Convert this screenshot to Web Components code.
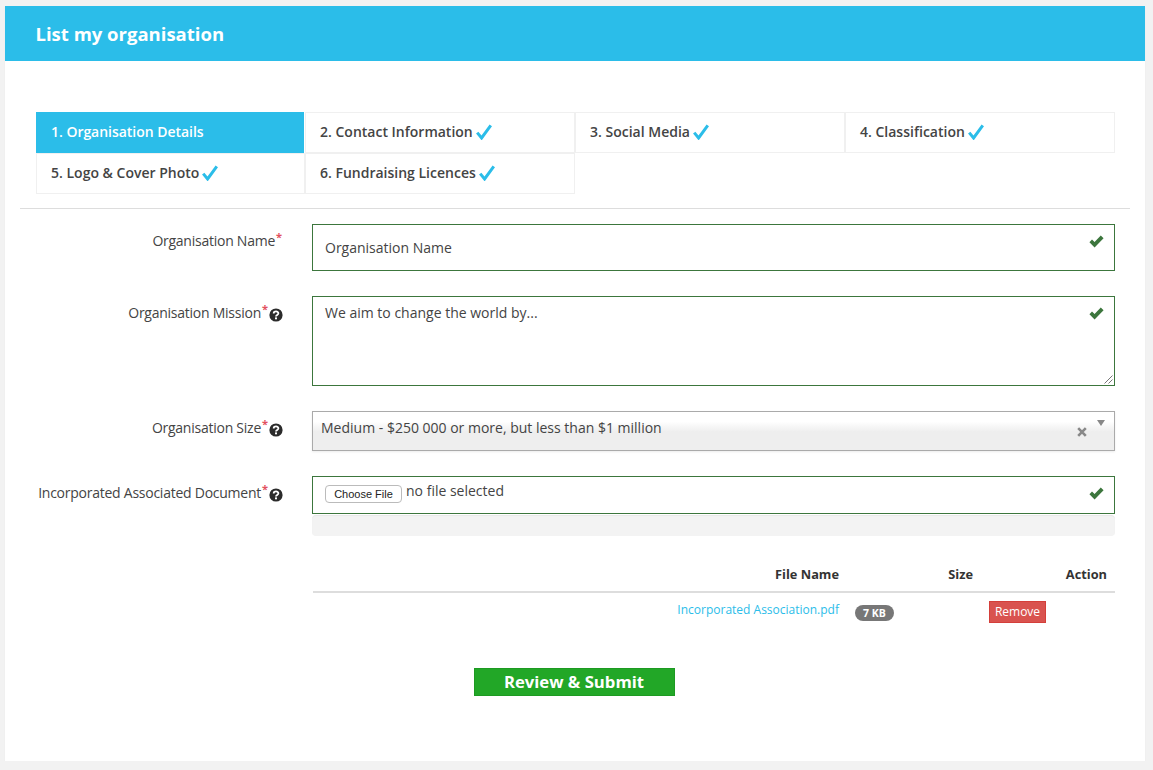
<!DOCTYPE html>
<html>
<head>
<meta charset="utf-8">
<title>List my organisation</title>
<style>
  html, body { margin: 0; padding: 0; background: #f2f2f2; }
  body { font-family: "Open Sans", "Liberation Sans", sans-serif; color: #444; font-size: 14px; }
  org-page { padding: 6px 8px 0 5px; }
</style>
</head>
<body>
<org-page title="List my organisation">
  <step-tabs>
    <step-tab active>1. Organisation Details</step-tab>
    <step-tab done>2. Contact Information</step-tab>
    <step-tab done>3. Social Media</step-tab>
    <step-tab done>4. Classification</step-tab>
    <step-tab done>5. Logo &amp; Cover Photo</step-tab>
    <step-tab done>6. Fundraising Licences</step-tab>
  </step-tabs>
  <form-row label="Organisation Name">
    <text-field height="47" pad-top="13" valid>Organisation Name</text-field>
  </form-row>
  <form-row label="Organisation Mission" help>
    <text-field height="90" pad-top="6" valid resizer>We aim to change the world by...</text-field>
  </form-row>
  <form-row label="Organisation Size" help>
    <select-field>Medium - $250 000 or more, but less than $1 million</select-field>
  </form-row>
  <form-row label="Incorporated Associated Document" help style="--row-gap:29px">
    <file-field></file-field>
  </form-row>
  <file-table></file-table>
  <submit-button>Review &amp; Submit</submit-button>
</org-page>

<script>
// Page frame: blue title bar, white card, slot for the form
class OrgPage extends HTMLElement {
  constructor() {
    super();
    this.attachShadow({ mode: 'open' }).innerHTML = `
      <style>
        :host { display: block; }
        .card { background: #fff; height: 755px; box-shadow: 0 1px 1px rgba(0,0,0,.06); display: flex; flex-direction: column; }
        h1 { margin: 0; height: 55px; line-height: 56px; padding-left: 30.5px; background: #2bbde9; color: #fff; font-size: 18.5px; font-weight: 700; }
        .body { padding: 51px 15px 0; }
      </style>
      <div class="card">
        <h1>${this.getAttribute('title')}</h1>
        <div class="body"><slot></slot></div>
      </div>`;
    this.removeAttribute('title');
  }
}

// Wizard steps, four to a line, with the rule under them
class StepTabs extends HTMLElement {
  constructor() {
    super();
    this.attachShadow({ mode: 'open' }).innerHTML = `
      <style>
        :host { display: block; padding: 0 15px 14px 16px; border-bottom: 1px solid #ddd; margin-bottom: 15px; }
        .grid { display: grid; grid-template-columns: 269px repeat(3, 270px); }
      </style>
      <div class="grid"><slot></slot></div>`;
  }
}

class StepTab extends HTMLElement {
  constructor() {
    super();
    this.attachShadow({ mode: 'open' }).innerHTML = `
      <style>
        :host { display: flex; align-items: center; height: 41px; box-sizing: border-box; padding: 0 0 2px 14px;
                border: 1px solid #f0f0f0; font-size: 14px; font-weight: 600; color: #444; }
        :host([active]) { background: #2bbde9; border-color: #2bbde9; color: #fff; margin-right: 1px; letter-spacing: -.03px; }
        svg { width: 16px; height: 16px; margin: 1px 0 0 3px; display: none; }
        :host([done]) svg { display: block; }
      </style>
      <slot></slot>
      <svg viewBox="0 0 16 16"><path d="M1.2 8.6 L5.6 14 L14.8 1.4" fill="none" stroke="#2bbde9" stroke-width="3"/></svg>`;
  }
}

// Label column on the left, control on the right
class FormRow extends HTMLElement {
  constructor() {
    super();
    const help = this.hasAttribute('help') ? `
      <svg class="help" viewBox="0 0 14 14">
        <circle cx="7" cy="7" r="6.6" fill="#2b2b2b"/>
        <path d="M4.7 5.4 C4.7 2.8 9.4 2.8 9.4 5.3 C9.4 7 7 6.8 7 8.5" fill="none" stroke="#fff" stroke-width="1.8"/>
        <rect x="6" y="9.4" width="2" height="1.9" fill="#fff"/>
      </svg>` : '';
    this.attachShadow({ mode: 'open' }).innerHTML = `
      <style>
        :host { display: grid; grid-template-columns: 277px 1fr; column-gap: 15px; margin-bottom: var(--row-gap, 25px); padding-right: 15px; }
        .label { display: flex; justify-content: flex-end; align-items: flex-start; box-sizing: border-box; padding: 7px 14px 0 0; line-height: 20px; color: #444; font-size: 14px; letter-spacing: -.25px; white-space: nowrap; }
        .label.nohelp { padding-right: 17px; }
        .req { color: #e2505e; font-size: 11px; font-weight: 700; line-height: 12px; margin: 0 -2px 0 1px; letter-spacing: 0; }
        .help { width: 14px; height: 14px; margin: 5px 0 0 3px; }
      </style>
      <div class="label ${help ? '' : 'nohelp'}"><span>${this.getAttribute('label')}</span><span class="req">*</span>${help}</div>
      <div><slot></slot></div>`;
  }
}

const okIcon = `<svg class="ok" viewBox="0 0 14 12" preserveAspectRatio="none"><path d="M0.4 6.6 L2.8 4.1 L5.2 6.4 L11 0.4 L13.6 3 L5.2 11.6 Z" fill="#3c763d"/></svg>`;

// Looks like a bootstrap input in its success state
class TextField extends HTMLElement {
  constructor() {
    super();
    const h = this.getAttribute('height');
    const top = this.getAttribute('pad-top');
    const resizer = this.hasAttribute('resizer')
      ? `<svg class="grip" viewBox="0 0 9 9"><path d="M0.5 8.5 L8.5 0.5 M4.5 8.5 L8.5 4.5" stroke="#777" stroke-width="1" fill="none"/></svg>` : '';
    this.attachShadow({ mode: 'open' }).innerHTML = `
      <style>
        :host { display: block; position: relative; box-sizing: border-box; height: ${h}px; padding: ${top}px 12px 0; border: 1px solid #3c763d; background: #fff; font-size: 14px; line-height: 20px; color: #444; }
        .ok { position: absolute; right: 10px; top: 10px; width: 15px; height: 13px; }
        .grip { position: absolute; right: 1px; bottom: 1px; width: 9px; height: 9px; }
      </style>
      <slot></slot>${okIcon}${resizer}`;
  }
}

// chosen.js style single select
class SelectField extends HTMLElement {
  constructor() {
    super();
    this.attachShadow({ mode: 'open' }).innerHTML = `
      <style>
        :host { display: block; position: relative; box-sizing: border-box; height: 40px; padding: 6px 8px 0; border: 1px solid #aaa;
                background: linear-gradient(#fff 0, #fff 25%, #eee 52%, #eee 100%); box-shadow: 0 1px 2px rgba(0,0,0,.08); font-size: 14px; line-height: 20px; color: #444; }
        .clear { position: absolute; right: 27px; top: 15px; width: 10px; height: 10px; }
        .arrow { position: absolute; right: 9px; top: 8px; width: 8px; height: 6px; }
      </style>
      <slot></slot>
      <svg class="clear" viewBox="0 0 10 10"><path d="M1.2 1.2 L8.8 8.8 M8.8 1.2 L1.2 8.8" stroke="#888" stroke-width="2.6" fill="none"/></svg>
      <svg class="arrow" viewBox="0 0 8 6"><path d="M0 0 H8 L4 6 Z" fill="#888"/></svg>`;
  }
}

// File input box plus the grey progress strip under it
class FileField extends HTMLElement {
  constructor() {
    super();
    this.attachShadow({ mode: 'open' }).innerHTML = `
      <style>
        :host { display: block; }
        .box { position: relative; box-sizing: border-box; height: 38px; border: 1px solid #3c763d; background: #fff; padding: 4px 12px 0; display: flex; align-items: flex-start; font-size: 14px; line-height: 20px; color: #444; }
        button { font: 11px "Liberation Sans", Arial, sans-serif; color: #222; height: 18px; width: 77px; margin: 4px 4px 0 0; padding: 0; background: #fff; border: 1px solid #bbb; border-radius: 4px; }
        .ok { position: absolute; right: 10px; top: 10px; width: 15px; height: 13px; }
        .progress { height: 21px; margin-top: 1px; background: #f3f3f3; border-radius: 4px; box-shadow: inset 0 1px 1px rgba(0,0,0,.05); }
      </style>
      <div class="box"><button type="button">Choose File</button><span>no file selected</span>${okIcon}</div>
      <div class="progress"></div>`;
  }
}

class FileTable extends HTMLElement {
  constructor() {
    super();
    this.attachShadow({ mode: 'open' }).innerHTML = `
      <style>
        :host { display: block; margin: 0 15px 45px 293px; font-size: 12px; }
        table { width: 100%; border-collapse: collapse; table-layout: fixed; }
        col.side { width: 134px; }
        th { height: 27px; padding: 0 8px 8px; box-sizing: border-box; text-align: right; font-size: 12.8px; font-weight: 700; color: #333; border-bottom: 2px solid #ddd; }
        td { padding: 8px 8px 0; vertical-align: top; line-height: 20px; }
        td.name { padding-top: 7px; text-align: right; color: #2bbde9; }
        .badge { display: inline-block; margin-top: 4px; padding: 0 8px; height: 16px; line-height: 16px; border-radius: 8px; background: #777; color: #fff; font-size: 10.5px; font-weight: 700; vertical-align: top; }
        .remove { display: block; width: 57px; height: 22px; box-sizing: border-box; background: #d9534f; border: 1px solid #d43f3a; color: #fff; font-size: 12px; line-height: 20px; text-align: center; }
      </style>
      <table>
        <colgroup><col><col class="side"><col class="side"></colgroup>
        <thead><tr><th>File Name</th><th>Size</th><th>Action</th></tr></thead>
        <tbody><tr>
          <td class="name">Incorporated Association.pdf</td>
          <td><span class="badge">7 KB</span></td>
          <td><span class="remove">Remove</span></td>
        </tr></tbody>
      </table>`;
  }
}

class SubmitButton extends HTMLElement {
  constructor() {
    super();
    this.attachShadow({ mode: 'open' }).innerHTML = `
      <style>
        :host { display: flex; justify-content: center; padding-right: 2px; }
        .btn { box-sizing: border-box; width: 201px; height: 28px; line-height: 26px; text-align: center; background: #22a727; border: 1px solid #1d9a22; color: #fff; font-size: 16.7px; font-weight: 700; }
      </style>
      <div class="btn"><slot></slot></div>`;
  }
}

customElements.define('org-page', OrgPage);
customElements.define('step-tabs', StepTabs);
customElements.define('step-tab', StepTab);
customElements.define('form-row', FormRow);
customElements.define('text-field', TextField);
customElements.define('select-field', SelectField);
customElements.define('file-field', FileField);
customElements.define('file-table', FileTable);
customElements.define('submit-button', SubmitButton);
</script>
</body>
</html>
